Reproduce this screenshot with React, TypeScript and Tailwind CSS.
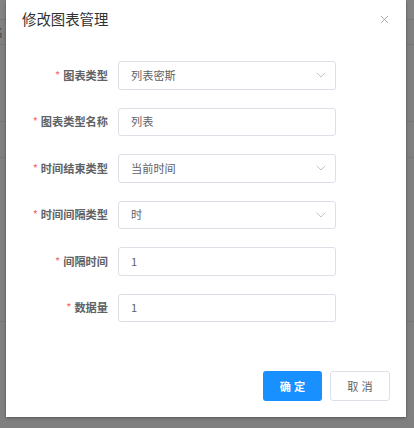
import React from "react";

const FONT = { fontFamily: '"Noto Sans CJK SC", "Noto Sans", sans-serif' };

function Chevron() {
  return (
    <svg width="10" height="6" viewBox="0 0 10 6" fill="none" className="text-[#c0c4cc]">
      <path d="M1 1l4 4 4-4" stroke="currentColor" strokeWidth="1" strokeLinecap="round" strokeLinejoin="round" />
    </svg>
  );
}

type Row = { label: string; value: string; select?: boolean };

const rows: Row[] = [
  { label: "图表类型", value: "列表密斯", select: true },
  { label: "图表类型名称", value: "列表" },
  { label: "时间结束类型", value: "当前时间", select: true },
  { label: "时间间隔类型", value: "时", select: true },
  { label: "间隔时间", value: "1" },
  { label: "数据量", value: "1" },
];

export default function App() {
  return (
    <div className="relative w-[414px] h-[428px] overflow-hidden bg-[#808080]" style={FONT}>
      {/* underlying page (masked) */}
      <div className="flex flex-col w-full">
        <div className="h-[20px] bg-[#838383] border-b border-[#777]" />
        <div className="h-[25px] border-b border-[#777] flex items-center">
          <span className="-ml-[8px] text-[11px] leading-none text-[#444]">名</span>
        </div>
        <div className="h-[77px] border-b border-[#777]" />
        <div className="h-[36px] border-b border-[#777]" />
        <div className="h-[164px] border-b border-[#777]" />
      </div>

      {/* dialog */}
      <div className="absolute left-[6px] top-0 w-[400px] h-[417px] bg-white flex flex-col shadow-[0_1px_3px_rgba(0,0,0,0.35)]">
        <div className="flex items-center justify-between pt-[9px] pl-[16px] pr-[17px]">
          <span className="text-[14.4px] leading-[20px] text-[#303133]">修改图表管理</span>
          <svg width="9" height="9" viewBox="0 0 10 10" className="text-[#a0a3aa]">
            <path d="M1 1l8 8M9 1l-8 8" stroke="currentColor" strokeWidth="1" />
          </svg>
        </div>

        <div className="flex flex-col gap-[18px] mt-[32px]">
          {rows.map((r) => (
            <div key={r.label} className="flex items-center">
              <div className="w-[112px] pr-[10px] flex justify-end items-center text-[11.2px] text-[#606266] font-semibold">
                <span className="text-[#f56c6c] mr-[3px] font-normal">*</span>
                <span>{r.label}</span>
              </div>
              <div className="w-[218px] h-[28.5px] border border-[#dcdfe6] rounded-[3px] flex items-center justify-between pl-[12px] pr-[9px] text-[11.2px] text-[#606266]">
                <span>{r.value}</span>
                {r.select && <Chevron />}
              </div>
            </div>
          ))}
        </div>

        <div className="mt-auto flex justify-end gap-[8px] pr-[16px] pb-[16px]">
          <button className="w-[59px] h-[30px] rounded-[3px] bg-[#1890ff] text-white text-[11.2px] font-semibold tracking-[3px] pl-[3px] flex items-center justify-center">
            确定
          </button>
          <button className="w-[60px] h-[30px] rounded-[3px] border border-[#dcdfe6] bg-white text-[#606266] text-[11.2px] tracking-[3px] pl-[3px] flex items-center justify-center">
            取消
          </button>
        </div>
      </div>
    </div>
  );
}
